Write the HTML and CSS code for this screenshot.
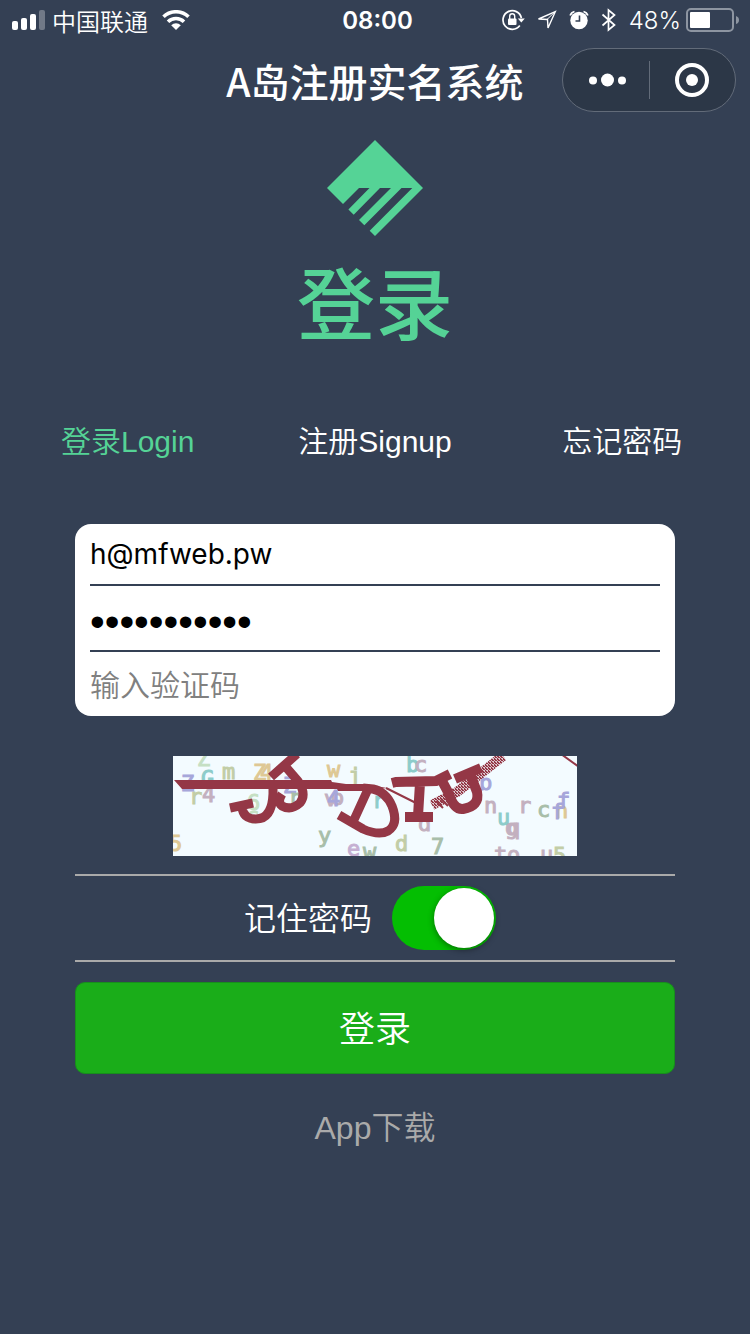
FILE: index.html
```html
<!DOCTYPE html>
<html lang="zh-CN">
<head>
<meta charset="utf-8">
<meta name="viewport" content="width=device-width, initial-scale=1">
<title>A岛注册实名系统</title>
<link rel="stylesheet" href="styles.css">
</head>
<body>
<div class="status">
  <div class="status-left">
    <svg class="signal" width="34" height="20" viewBox="0 0 34 20" fill="#fff" aria-hidden="true">
      <rect x="0" y="11" width="6" height="9" rx="2"/><rect x="9" y="8" width="6" height="12" rx="2"/>
      <rect x="18" y="4" width="6" height="16" rx="2"/><rect x="27" y="0" width="6" height="20" rx="2" opacity=".3"/>
    </svg>
    <span class="carrier">中国联通</span>
    <svg width="28" height="20" viewBox="0 0 28 20" aria-hidden="true">
      <path d="M1.500 6.800a18 18 0 0 1 25 0M6 11.800a11.500 11.500 0 0 1 16 0" fill="none" stroke="#fff" stroke-width="3.600"/>
      <path d="M14 20l-4.800-4.800a7 7 0 0 1 9.600 0z" fill="#fff"/>
    </svg>
  </div>
  <time class="clock">08:00</time>
  <div class="status-right">
    <svg width="23" height="22" viewBox="0 0 23 22" aria-hidden="true">
      <path d="M19.400 9A9.300 9.300 0 1 0 17.800 16.500" fill="none" stroke="#fff" stroke-width="1.700"/>
      <path d="M15.800 9.500h7l-3.500 4z" fill="#fff"/>
      <rect x="6" y="9.600" width="8.500" height="6.400" rx="1" fill="#fff"/>
      <path d="M7.700 10V7.300a2.500 2.500 0 0 1 5 0V10" fill="none" stroke="#fff" stroke-width="1.400"/>
    </svg>
    <svg width="20" height="20" viewBox="0 0 20 20" aria-hidden="true">
      <path d="M18.300 1.700L1.500 9l9 .5.500 8.500z" fill="none" stroke="#fff" stroke-width="1.400"/><path d="M18.600 1.300L10 9.500" stroke="#fff"/>
    </svg>
    <svg width="20" height="20" viewBox="0 0 20 20" aria-hidden="true">
      <circle cx="10" cy="10.500" r="8.700" fill="#fff"/>
      <path d="M1.200 5.500a6 6 0 0 1 4.300-4M18.800 5.500a6 6 0 0 0-4.300-4" fill="none" stroke="#fff" stroke-width="1.800"/>
      <path d="M10.500 5.500v5.500H6.500" fill="none" stroke="#344054" stroke-width="1.600"/>
    </svg>
    <svg width="16" height="24" viewBox="0 0 16 24" aria-hidden="true">
      <path d="M1.500 6.500l12 10.500-6 5V2l6 5-12 10.500" fill="none" stroke="#fff" stroke-width="1.700"/>
    </svg>
    <span class="percent">48%</span>
    <svg class="battery" width="53" height="24" viewBox="0 0 53 24" aria-hidden="true">
      <rect x="1" y="1" width="46" height="22" rx="4" fill="none" stroke="#8d95a1" stroke-width="2"/>
      <rect x="4" y="4" width="20" height="16" rx="1" fill="#fff"/>
      <path d="M50 8q3 1 3 4t-3 4z" fill="#8d95a1"/>
    </svg>
  </div>
</div>

<header class="bar">
  <h1 class="title">A岛注册实名系统</h1>
  <div class="capsule">
    <button class="cap-btn cap-more" type="button" aria-label="更多">
      <svg width="38" height="14" viewBox="0 0 38 14" fill="#fff"><circle cx="4" cy="7.500" r="4"/><circle cx="18.500" cy="7" r="6.500"/><circle cx="33" cy="7.500" r="4"/></svg>
    </button>
    <button class="cap-btn cap-close" type="button" aria-label="关闭">
      <svg width="34" height="34" viewBox="0 0 34 34"><circle cx="17" cy="17" r="15" fill="none" stroke="#fff" stroke-width="4"/><circle cx="17" cy="17" r="6" fill="#fff"/></svg>
    </button>
  </div>
</header>

<main>
  <div class="brand">
    <svg width="96" height="96" viewBox="0 0 96 96" fill="#55d396" aria-hidden="true">
      <path d="M48 0L96 48 48 96l-5.300-5.300L85.300 48H74.500L37.300 85.300 32 80l32-32H53L26.700 74.700l-5.300-5.300L42.500 48H32L16 64 0 48z"/>
    </svg>
    <h2 class="heading">登录</h2>
  </div>

  <nav class="tabs">
    <a class="tab tab-on" href="#login">登录Login</a>
    <a class="tab" href="#signup">注册Signup</a>
    <a class="tab" href="#forgot">忘记密码</a>
  </nav>

  <form class="form" id="login">
    <div class="fields">
      <input class="field" type="text" aria-label="邮箱" value="h@mfweb.pw">
      <input class="field field-pass" type="password" aria-label="密码" value="abcdefghijk">
      <input class="field field-code" type="text" aria-label="验证码" placeholder="输入验证码">
    </div>

    <svg class="captcha" width="404" height="100" viewBox="0 0 404 100" role="img" aria-label="验证码图片">
      <defs>
        <pattern id="mesh" width="3" height="3" patternUnits="userSpaceOnUse"><rect width="3" height="3" fill="#d9c3ca"/><path d="M0 0h2v1H0zM1 1h2v1H1zM0 2h1v1H0z" fill="#943746"/></pattern>
      </defs>
      <rect width="404" height="100" fill="#f3fbff"/>
      <g class="noise">
        <g fill="#c5dfc3" stroke="#c5dfc3"><text x="24" y="10">Z</text><text x="74" y="54">6</text><text x="74" y="67">s</text></g>
        <g fill="#8dccca" stroke="#8dccca"><text x="28" y="30">G</text><text x="233" y="16">b</text><text x="324" y="69">u</text><text x="199" y="52">r</text></g>
        <g fill="#c2cda6" stroke="#c2cda6"><text x="49" y="23">m</text><text x="16" y="48">r</text><text x="175" y="27">j</text><text x="222" y="95">d</text><text x="380" y="107">5</text></g>
        <g fill="#dec894" stroke="#dec894"><text x="80" y="24">Z</text><text x="87" y="24">4</text><text x="154" y="21">w</text><text x="-4" y="95">5</text><text x="382" y="62">n</text></g>
        <g fill="#c3b0bf" stroke="#c3b0bf"><text x="29" y="46">4</text><text x="241" y="16">c</text><text x="151" y="50">v</text><text x="158" y="49">o</text><text x="245" y="75">d</text><text x="311" y="57">n</text><text x="345" y="57">r</text><text x="332" y="79">g</text><text x="334" y="79">q</text><text x="321" y="106">t</text><text x="334" y="106">o</text><text x="367" y="106">u</text></g>
        <g fill="#a6a6da" stroke="#a6a6da"><text x="110" y="37">Z</text><text x="8" y="35">Z</text><text x="154" y="50">4</text><text x="306" y="34">b</text><text x="384" y="52">f</text><text x="378" y="63">f</text></g>
        <g fill="#a8bea9" stroke="#a8bea9"><text x="117" y="49">n</text><text x="145" y="87">y</text><text x="190" y="103">w</text><text x="258" y="98">7</text><text x="364" y="61">c</text></g>
        <text x="174" y="100" fill="#c5afd2" stroke="#c5afd2">e</text>
      </g>
      <path d="M259 49l25-13L330 0" fill="none" stroke="url(#mesh)" stroke-width="10"/>
      <g fill="none" stroke="#943746" stroke-width="9">
        <path d="M100 30v8q-1 25-17 25-13 0-14-12M57 52l23-5"/>
        <path d="M98 21l26-23M112 10l13 15q9 13 2 22-9 8-18 3-5-4 0-12"/>
        <path d="M196 31l-16 35M166 59l24 14q16 7 25 2 11-7 4-25-6-14-19-17l-10-1"/>
        <path d="M219 27l4-1 40-1 14-7M247 27l-2 33M232 61h28" stroke-width="10"/>
        <path d="M268 23l8 15q5 16 14 15 17-3 14-17l-7-18M282 23l26-11" stroke-width="10"/>
      </g>
      <path d="M1 24h157l1 2 14 2h19l22 4-22 3h-27l-1-2H9z" fill="#943746"/>
      <path d="M213 32l30 15M388-2l18 13M263 45l7 7M268 43l7 7M273 41l6 6" fill="none" stroke="#943746" stroke-width="2"/>
    </svg>

    <div class="remember">
      <label class="remember-label" for="remember">记住密码</label>
      <input class="switch" id="remember" type="checkbox" role="switch" checked>
    </div>
    <button class="submit" type="button">登录</button>
  </form>
  <a class="download" href="#app">App下载</a>
</main>
</body>
</html>
```
FILE: styles.css
```css
* { box-sizing: border-box; }
body {
  margin: 0;
  background: #344054;
  color: #fff;
  font-family: "Liberation Sans", "Noto Sans CJK SC", sans-serif;
  font-size: 30px;
  font-weight: 350;
}
svg { display: block; flex: none; }
h1, h2 { margin: 0; font-weight: 500; }
a { color: inherit; text-decoration: none; }
button { font: inherit; color: inherit; cursor: pointer; }

.status {
  display: grid;
  grid-template-columns: 1fr auto 1fr;
  align-items: center;
  height: 40px;
  padding: 0 11px 0 12px;
  font-family: Inter, "Noto Sans CJK SC", sans-serif;
  font-size: 24px;
}
.status-left, .status-right { display: flex; align-items: center; }
.status-left { gap: 14px; }
.status-right { justify-content: flex-end; gap: 12px; }
.signal { margin-right: -8px; }
.clock { padding-left: 4px; font-weight: 600; }
.percent { font-weight: 300; }
.battery { margin-left: -7px; }

.bar {
  display: grid;
  grid-template-columns: 1fr auto 1fr;
  align-items: center;
  height: 88px;
  padding: 0 14px 8px;
}
.title {
  grid-column: 2;
  font-family: "Noto Sans CJK SC", sans-serif;
  font-size: 39px;
  line-height: 56px;
}
.capsule {
  justify-self: end;
  display: grid;
  grid-template-columns: 1fr 1fr;
  width: 174px;
  height: 64px;
  border: 1px solid #626b79;
  border-radius: 32px;
  background: #2c3747;
}
.cap-btn {
  display: flex;
  align-items: center;
  justify-content: center;
  margin: 12px 0;
  padding: 0;
  border: 0;
  background: none;
}
.cap-more { padding-left: 4px; }
.cap-close { padding-right: 2px; border-left: 1px solid #626b79; }

.brand {
  display: flex;
  flex-direction: column;
  align-items: center;
  padding-top: 12px;
  color: #55d396;
}
.heading {
  margin-top: 6px;
  font-family: "Noto Sans CJK SC", sans-serif;
  font-size: 78px;
  line-height: 116px;
}

.tabs {
  display: grid;
  grid-template-columns: repeat(3, 1fr);
  margin-top: 62px;
  padding: 0 4px;
  line-height: 44px;
  text-align: center;
}
.tab-on { color: #55d396; }

.form {
  display: flex;
  flex-direction: column;
  width: 80%;
  margin: 60px auto 0;
}
.fields {
  display: flex;
  flex-direction: column;
  padding: 0 15px;
  border-radius: 16px;
  background: #fff;
}
.field {
  width: 100%;
  height: 66px;
  padding: 0;
  border: 0;
  border-bottom: 2px solid #344054;
  outline: 0;
  background: none;
  color: #000;
  font: 400 28px Inter, "Noto Sans CJK SC", sans-serif;
}
.field:first-child { height: 62px; }
.field-pass { padding-top: 8px; font: 400 42px "Liberation Sans", sans-serif; }
.field-code { height: 64px; padding-top: 2px; border-bottom: 0; font-size: 30px; }
.field-code::placeholder { color: #808080; font-weight: 350; opacity: 1; }

.captcha { align-self: center; margin: 40px 0 18px; }
.noise { font: 400 22px "DejaVu Sans Mono", monospace; stroke-width: 1px; }

.remember {
  display: flex;
  align-items: center;
  justify-content: center;
  gap: 20px;
  height: 88px;
  padding-right: 10px;
  border: solid #aaa;
  border-width: 2px 0;
  font-size: 32px;
}
.remember-label { padding-bottom: 4px; }
.switch {
  appearance: none;
  width: 104px;
  height: 64px;
  margin: 0;
  padding: 2px;
  border-radius: 32px;
  background: #888;
}
.switch::before {
  content: "";
  display: block;
  width: 60px;
  height: 60px;
  border-radius: 50%;
  background: #fff;
  box-shadow: 0 2px 6px rgba(0, 0, 0, .4);
}
.switch:checked { background: #04be02; }
.switch:checked::before { margin-left: 40px; }

.submit {
  height: 92px;
  margin-top: 20px;
  padding: 0 0 4px;
  border: 1px solid #178f1c;
  border-radius: 10px;
  background: #1aad19;
  font-size: 36px;
}
.download {
  display: block;
  width: fit-content;
  margin: 32px auto 0;
  color: #aaa;
  font-size: 32px;
  line-height: 44px;
}
```
